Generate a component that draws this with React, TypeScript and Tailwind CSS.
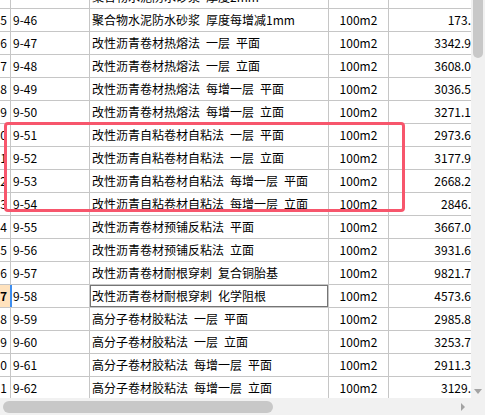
import React from 'react'

type Row = {
  no: string
  code: string
  name: string
  unit: string
  price: string
}

const rows: Row[] = [
  { no: '', code: '', name: '聚合物水泥防水砂浆 厚度2mm', unit: '', price: '' },
  { no: '5', code: '9-46', name: '聚合物水泥防水砂浆 厚度每增减1mm', unit: '100m2', price: '173.' },
  { no: '6', code: '9-47', name: '改性沥青卷材热熔法 一层 平面', unit: '100m2', price: '3342.9' },
  { no: '7', code: '9-48', name: '改性沥青卷材热熔法 一层 立面', unit: '100m2', price: '3608.0' },
  { no: '8', code: '9-49', name: '改性沥青卷材热熔法 每增一层 平面', unit: '100m2', price: '3036.5' },
  { no: '9', code: '9-50', name: '改性沥青卷材热熔法 每增一层 立面', unit: '100m2', price: '3271.1' },
  { no: '0', code: '9-51', name: '改性沥青自粘卷材自粘法 一层 平面', unit: '100m2', price: '2973.6' },
  { no: '1', code: '9-52', name: '改性沥青自粘卷材自粘法 一层 立面', unit: '100m2', price: '3177.9' },
  { no: '2', code: '9-53', name: '改性沥青自粘卷材自粘法 每增一层 平面', unit: '100m2', price: '2668.2' },
  { no: '3', code: '9-54', name: '改性沥青自粘卷材自粘法 每增一层 立面', unit: '100m2', price: '2846.' },
  { no: '4', code: '9-55', name: '改性沥青卷材预铺反粘法 平面', unit: '100m2', price: '3667.0' },
  { no: '5', code: '9-56', name: '改性沥青卷材预铺反粘法 立面', unit: '100m2', price: '3931.6' },
  { no: '6', code: '9-57', name: '改性沥青卷材耐根穿刺 复合铜胎基', unit: '100m2', price: '9821.7' },
  { no: '7', code: '9-58', name: '改性沥青卷材耐根穿刺 化学阻根', unit: '100m2', price: '4573.6' },
  { no: '8', code: '9-59', name: '高分子卷材胶粘法 一层 平面', unit: '100m2', price: '2985.8' },
  { no: '9', code: '9-60', name: '高分子卷材胶粘法 一层 立面', unit: '100m2', price: '3253.7' },
  { no: '0', code: '9-61', name: '高分子卷材胶粘法 每增一层 平面', unit: '100m2', price: '2911.3' },
  { no: '1', code: '9-62', name: '高分子卷材胶粘法 每增一层 立面', unit: '100m2', price: '3129.' },
]

// 选中行 9-58
const ACTIVE = '9-58'

// 宋体半角空格较宽，用 en space 代替
const wide = (s: string) => s.replace(/ /g, '\u2002')

function GridRow({ r }: { r: Row }) {
  const active = r.code === ACTIVE
  return (
    <div className="flex h-[23px] border-b border-[#c6c6c6] leading-[22px] whitespace-nowrap">
      <div
        className={`w-[11px] shrink-0 overflow-hidden border-r border-[#c6c6c6] text-right pr-[3px] ${
          active ? 'bg-[#ffe2bd] font-bold' : ''
        }`}
      >
        {r.no}
      </div>
      <div className="relative w-[79px] shrink-0 border-r border-[#c6c6c6] pl-[2px]">
        {active && <div className="absolute -left-[1px] top-0 bottom-0 w-[2px] bg-[#3d8ef0]" />}
        {r.code}
      </div>
      <div className="relative w-[239px] shrink-0 border-r border-[#c6c6c6] pl-[2px] overflow-hidden">
        {active && <div className="absolute -inset-[1px] border-2 border-[#757575]" />}
        {wide(r.name)}
      </div>
      <div className="w-[60px] shrink-0 border-r border-[#c6c6c6] text-center">{r.unit}</div>
      <div className="w-[83px] shrink-0 overflow-hidden text-right pr-[1px]">{r.price}</div>
    </div>
  )
}

export default function App() {
  return (
    <div
      className="relative w-[485px] h-[415px] overflow-hidden bg-white text-[12px] text-black"
      style={{ fontFamily: '"Noto Sans CJK SC", "Liberation Sans", sans-serif' }}
    >
      <div className="flex h-[415px]">
        <div className="flex flex-col w-[471px] shrink-0">
          <div className="flex-1 overflow-hidden">
            <div className="-mt-[14px]">
              {rows.map((r, i) => (
                <GridRow key={i} r={r} />
              ))}
            </div>
          </div>
          {/* 横向滚动条 */}
          <div className="h-[17px] shrink-0 bg-[#f1f1f1] flex items-center pl-[3px] pr-[4px]">
            <div className="w-[270px] h-[12px] rounded-full bg-[#c8c8c8]" />
            <div className="flex-1" />
            <svg width="6" height="8" viewBox="0 0 6 8" className="mr-[1px]">
              <path d="M1 0 L5 4 L1 8 Z" fill="#a3a3a3" />
            </svg>
          </div>
        </div>
        {/* 纵向滚动条 */}
        <div className="flex flex-col w-[14px] shrink-0 bg-[#f1f1f1]">
          <div className="flex-1 flex flex-col items-center">
            <div className="w-[10px] h-[58px] rounded-b-full bg-[#c8c8c8]" />
            <div className="flex-1" />
            <svg width="8" height="5" viewBox="0 0 8 5" className="mb-[4px]">
              <path d="M0 0 L8 0 L4 5 Z" fill="#a3a3a3" />
            </svg>
          </div>
          <div className="h-[17px] bg-[#f1f1f1]" />
        </div>
      </div>

      {/* 红色标注框 */}
      <div className="absolute left-[4px] top-[122px] w-[401px] h-[90px] border-[3px] border-[#f7566c] rounded-[4px]" />
    </div>
  )
}
